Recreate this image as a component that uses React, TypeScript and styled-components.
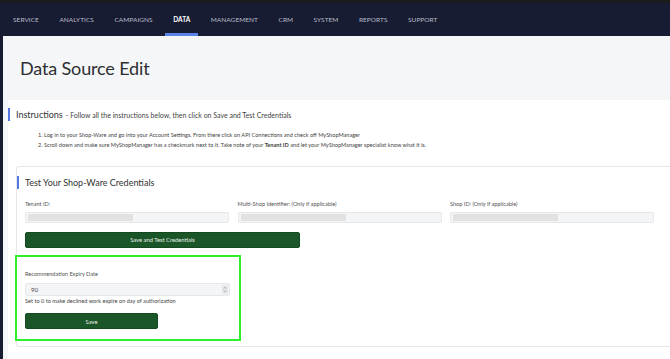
import styled, { createGlobalStyle } from "styled-components";

const GlobalStyle = createGlobalStyle`
  html, body {
    margin: 0;
    padding: 0;
    background: #171c33;
    font-family: Lato, "Open Sans", sans-serif;
    overflow: hidden;
  }
`;

const Page = styled.div`
  width: 670px;
  height: 359px;
  background: #171c33;
  border-top: 3px solid #1b1b1d;
  box-sizing: border-box;
  display: flex;
  flex-direction: column;
`;

const NavBar = styled.nav`
  height: 33px;
  flex-shrink: 0;
  display: flex;
  align-items: stretch;
  padding-left: 13px;
  gap: 20.5px;
`;

const NavItem = styled.a<{ $active?: boolean }>`
  display: flex;
  align-items: center;
  font-size: 6.5px;
  letter-spacing: 0.05px;
  text-transform: uppercase;
  color: ${(p) => (p.$active ? "#ffffff" : "#b9bdc9")};
  font-weight: ${(p) => (p.$active ? 700 : 400)};
  padding: 3px ${(p) => (p.$active ? "8px" : "0")} 0;
  margin: 0 ${(p) => (p.$active ? "-8px" : "0")};
  border-bottom: 3px solid ${(p) => (p.$active ? "#5b82e8" : "transparent")};
`;

const Main = styled.main`
  flex: 1;
  margin-left: 3px;
  background: #f5f6f8;
  display: flex;
  flex-direction: column;
  overflow: hidden;
`;

const Title = styled.h1`
  margin: 0;
  padding-left: 17px;
  height: 64px;
  flex-shrink: 0;
  display: flex;
  align-items: center;
  font-size: 18px;
  letter-spacing: -0.15px;
  font-weight: 400;
  color: #2e2f33;
`;

const Card = styled.section`
  flex: 1;
  margin-left: 5px;
  background: #ffffff;
  padding-top: 8px;
`;

const Heading = styled.div`
  display: flex;
  align-items: center;
  height: 13px;
  border-left: 2px solid #5577e0;
  padding-left: 6px;
  gap: 3px;
`;

const HeadingTitle = styled.span<{ $size: number }>`
  font-size: ${(p) => p.$size}px;
  color: #333;
`;

const HeadingNote = styled.span`
  font-size: 7px;
  color: #444;
`;

const Steps = styled.ol`
  margin: 9px 0 0 0;
  padding-left: 30px;
  list-style: none;
  font-size: 5.6px;
  color: #444;
  line-height: 10px;
`;

const Step = styled.li``;

const Section = styled.section`
  margin: 16px 0 0 8px;
  border: 1px solid #e6e7ea;
  border-right: none;
  border-radius: 3px 0 0 3px;
  padding: 9px 0 0 0;
  height: 181px;
  box-sizing: border-box;
`;

const SectionBody = styled.div`
  padding-left: 8px;
`;

const Fields = styled.div`
  display: grid;
  grid-template-columns: repeat(3, 204px);
  column-gap: 8.5px;
  margin-top: 9.5px;
`;

const Field = styled.div`
  display: flex;
  flex-direction: column;
`;

const Label = styled.label`
  font-size: 5.6px;
  color: #555;
  height: 9px;
  line-height: 9px;
`;

const Input = styled.div`
  margin-top: 4px;
  height: 9px;
  background: #f4f5f7;
  border: 1px solid #e6e7ea;
  border-radius: 2px;
  display: flex;
  align-items: center;
  padding-left: 2px;
`;

const Redacted = styled.span`
  width: 105px;
  height: 7px;
  background: #e2e2e3;
`;

const Button = styled.button<{ $width: number }>`
  display: block;
  width: ${(p) => p.$width}px;
  height: 16px;
  background: #1b5628;
  border: 1px solid #154a21;
  border-radius: 2px;
  color: #e8efe9;
  font-family: inherit;
  font-size: 5.8px;
  padding: 0;
  cursor: pointer;
`;

const TestButton = styled(Button)`
  margin-top: 9px;
`;

const Highlight = styled.div`
  margin: 7px 0 0 -10px;
  width: 226px;
  height: 86px;
  box-sizing: border-box;
  border: 2px solid #2cf02c;
  padding: 12.5px 0 0 8px;
  display: flex;
  flex-direction: column;
`;

const NumberInput = styled(Input)`
  width: 197px;
  height: 11px;
  justify-content: space-between;
  padding: 0 1px 0 5px;
  margin-top: 4.5px;
`;

const NumberValue = styled.span`
  font-size: 6px;
  color: #444;
`;

const Spinner = styled.span`
  width: 6px;
  height: 9px;
  background: #e6e7ea;
  border-radius: 1px;
  display: flex;
  align-items: center;
  justify-content: center;
`;

const Hint = styled.div`
  font-size: 5.6px;
  color: #444;
  margin-top: 1.5px;
  line-height: 7px;
`;

const SaveButton = styled(Button)`
  margin-top: 9px;
`;

const navItems = [
  "Service",
  "Analytics",
  "Campaigns",
  "Data",
  "Management",
  "CRM",
  "System",
  "Reports",
  "Support",
];

const fields = [
  "Tenant ID:",
  "Multi-Shop Identifier: (Only if applicable)",
  "Shop ID: (Only if applicable)",
];

const App: React.FC = () => {
  return (
    <Page>
      <GlobalStyle />
      <NavBar>
        {navItems.map((item) => (
          <NavItem key={item} $active={item === "Data"}>
            {item}
          </NavItem>
        ))}
      </NavBar>
      <Main>
        <Title>Data Source Edit</Title>
        <Card>
          <Heading>
            <HeadingTitle $size={9}>Instructions</HeadingTitle>
            <HeadingNote>
              - Follow all the instructions below, then click on Save and Test
              Credentials
            </HeadingNote>
          </Heading>
          <Steps>
            <Step>
              1. Log in to your Shop-Ware and go into your Account Settings.
              From there click on API Connections and check off MyShopManager
            </Step>
            <Step>
              2. Scroll down and make sure MyShopManager has a checkmark next to
              it. Take note of your <b>Tenant ID</b> and let your MyShopManager
              specialist know what it is.
            </Step>
          </Steps>
          <Section>
            <Heading>
              <HeadingTitle $size={9}>Test Your Shop-Ware Credentials</HeadingTitle>
            </Heading>
            <SectionBody>
              <Fields>
                {fields.map((f) => (
                  <Field key={f}>
                    <Label>{f}</Label>
                    <Input>
                      <Redacted />
                    </Input>
                  </Field>
                ))}
              </Fields>
              <TestButton $width={275}>Save and Test Credentials</TestButton>
              <Highlight>
                <Label>Recommendation Expiry Date</Label>
                <NumberInput>
                  <NumberValue>90</NumberValue>
                  <Spinner>
                    <svg width="4" height="7" viewBox="0 0 4 7">
                      <path
                        d="M0.8 2.6 L2 1.2 L3.2 2.6 M0.8 4.4 L2 5.8 L3.2 4.4"
                        fill="none"
                        stroke="#888"
                        strokeWidth="0.6"
                      />
                    </svg>
                  </Spinner>
                </NumberInput>
                <Hint>
                  Set to 0 to make declined work expire on day of authorization
                </Hint>
                <SaveButton $width={133}>Save</SaveButton>
              </Highlight>
            </SectionBody>
          </Section>
        </Card>
      </Main>
    </Page>
  );
};

export default App;
